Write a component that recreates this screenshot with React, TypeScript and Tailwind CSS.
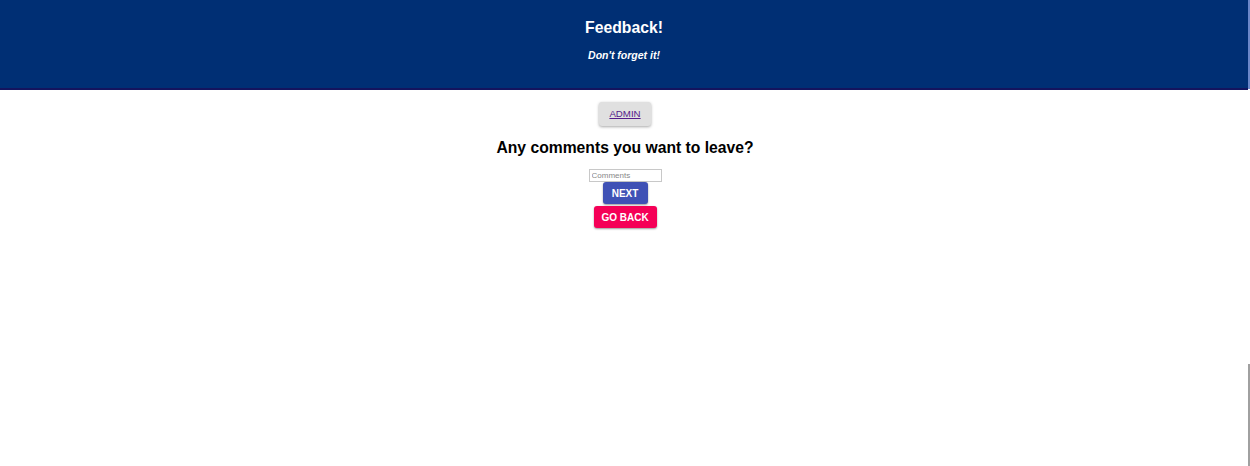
import React from "react";

export default function App() {
  return (
    <div className="w-[1250px] h-[466px] bg-white relative overflow-hidden" style={{ fontFamily: '"Liberation Sans", Arial, sans-serif' }}>
      <header className="w-[1248px] h-[90px] bg-[#002f74] border-b-2 border-[#14145e] flex flex-col items-center text-white">
        <h1 className="mt-[19px] text-[15.75px] leading-[18px] font-bold">Feedback!</h1>
        <h5 className="mt-[12px] text-[10.5px] leading-[13px] font-bold italic">Don't forget it!</h5>
      </header>
      <div className="absolute right-0 top-0 w-[2px] h-[89px] bg-[#6b87c9]" />
      <div className="absolute right-0 top-[364px] w-[2px] h-[102px] bg-[#a0a0a0]" />
      <main className="flex flex-col items-center">
        <button className="mt-[12px] w-[52px] h-[24px] bg-[#e0e0e0] rounded-[3px] shadow-[0_1px_3px_rgba(0,0,0,0.35)] flex items-center justify-center">
          <a className="text-[9.7px] text-[#551a8b] underline leading-none">ADMIN</a>
        </button>
        <h2 className="mt-[12px] text-[15.7px] leading-[20px] font-bold text-black">Any comments you want to leave?</h2>
        <input
          placeholder="Comments"
          className="mt-[11px] w-[73px] h-[13px] border border-[#c8c8c8] text-[8px] px-[2px] placeholder:text-[#888] outline-none"
        />
        <button className="w-[45px] h-[22px] bg-[#3f51b5] rounded-[3px] shadow-[0_1px_2px_rgba(0,0,0,0.4)] text-white text-[10px] font-bold">NEXT</button>
        <button className="mt-[2px] w-[63px] h-[22px] bg-[#f50057] rounded-[3px] shadow-[0_1px_2px_rgba(0,0,0,0.4)] text-white text-[10px] font-bold">GO BACK</button>
      </main>
    </div>
  );
}
